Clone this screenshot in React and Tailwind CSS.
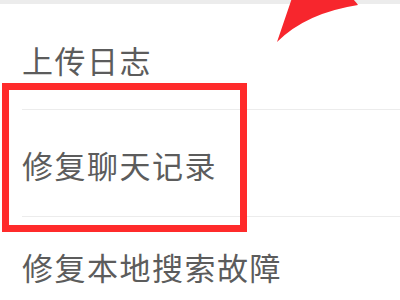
import React from "react";

const rows = [
  { label: "上传日志", className: "h-[106px] pt-[40px]" },
  { label: "修复聊天记录", className: "h-[107px] pt-[39px]" },
  { label: "修复本地搜索故障", className: "h-[90px] pt-[34px]" },
];

export default function App() {
  return (
    <div
      className="relative w-[400px] h-[300px] overflow-hidden bg-white"
      style={{ fontFamily: '"Noto Sans CJK SC", "Noto Sans", sans-serif' }}
    >
      {/* top strip */}
      <div className="h-[4px] bg-[#ececec]" />

      {/* settings rows */}
      <div className="flex flex-col">
        {rows.map((row) => (
          <div
            key={row.label}
            className={`ml-[22px] border-b border-[#ececec] ${row.className}`}
          >
            <span className="block text-[31px] leading-[31px] tracking-[1.5px] text-[#5c5c5c]">
              {row.label}
            </span>
          </div>
        ))}
      </div>

      {/* highlight box */}
      <div className="absolute left-[2px] top-[83px] w-[245px] h-[149px] border-[7px] border-[#ff2b2b]" />

      {/* arrow tip */}
      <svg
        className="absolute left-0 top-0"
        width="400"
        height="60"
        viewBox="0 0 400 60"
      >
        <path
          d="M277 42 L292 -2 L352 -2 Q356 2 358 5 Q306 13 277 42 Z"
          fill="#f7262d"
        />
      </svg>
    </div>
  );
}
